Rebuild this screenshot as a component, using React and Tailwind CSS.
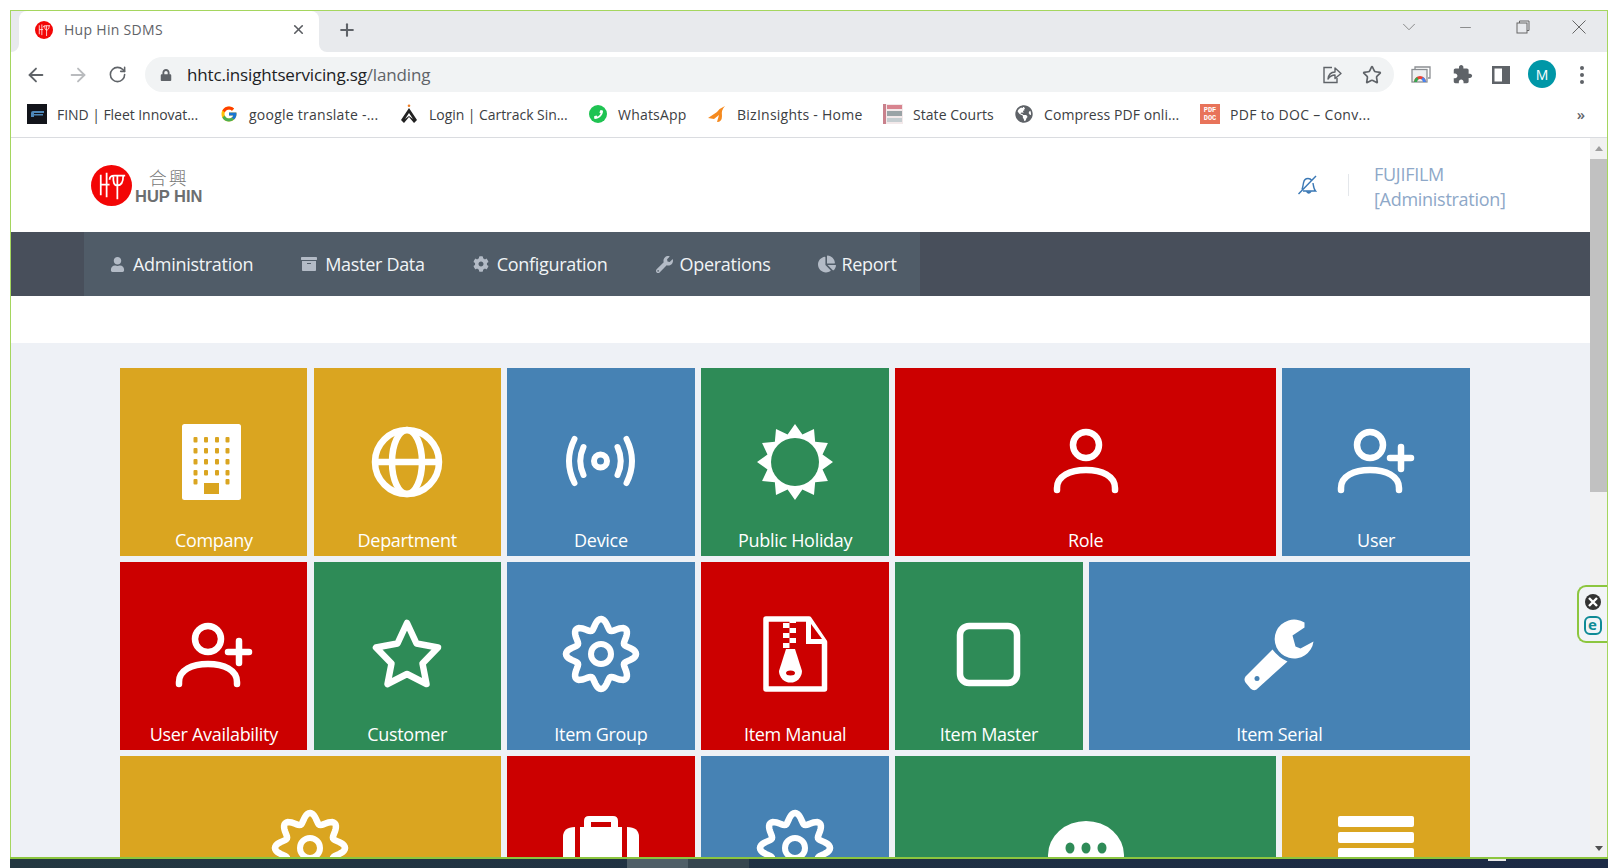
import React from "react";
import { ArrowLeft, ArrowRight, RotateCw, X, Plus, Star, ChevronDown, Minus } from "lucide-react";
import { FaUser, FaArchive, FaCog, FaWrench, FaChartPie, FaLock, FaPhoneAlt, FaGlobeAmericas } from "react-icons/fa";
import { FcGoogle } from "react-icons/fc";

const OPEN = "font-['Open_Sans',sans-serif]";

function gearPath(cx, cy, R, a, n) {
  const pts = [];
  for (let i = 0; i < 160; i++) {
    const t = (i / 160) * Math.PI * 2;
    const r = R + a * Math.cos(n * t);
    pts.push(`${(cx + r * Math.sin(t)).toFixed(2)},${(cy - r * Math.cos(t)).toFixed(2)}`);
  }
  return "M" + pts.join("L") + "Z";
}
function starPoints(cx, cy, ro, ri, n) {
  const pts = [];
  for (let i = 0; i < n * 2; i++) {
    const t = (i / (n * 2)) * Math.PI * 2;
    const r = i % 2 === 0 ? ro : ri;
    pts.push(`${(cx + r * Math.sin(t)).toFixed(2)},${(cy - r * Math.cos(t)).toFixed(2)}`);
  }
  return pts.join(" ");
}

const Svg = ({ children }) => (
  <svg width="76" height="76" viewBox="0 0 76 76" fill="none" stroke="none" className="overflow-visible">{children}</svg>
);

const IconCompany = ({ bg }) => {
  const xs = [19.5, 30, 41, 51.5];
  const ys = [13, 24, 35, 46];
  return (
    <Svg>
      <rect x="6" y="0" width="59" height="76" rx="2.5" fill="#fff" />
      {ys.map((y) => xs.map((x) => <rect key={x + "-" + y} x={x - 2} y={y} width="4" height="5.5" rx="1" fill={bg} />))}
      <rect x="17.5" y="55" width="4" height="5.5" rx="1" fill={bg} />
      <rect x="49.5" y="55" width="4" height="5.5" rx="1" fill={bg} />
      <rect x="28" y="59" width="15" height="11" fill={bg} />
    </Svg>
  );
};
const IconGlobe = () => (
  <Svg>
    <g stroke="#fff" strokeWidth="6.5">
      <circle cx="38" cy="38" r="32" />
      <ellipse cx="38" cy="38" rx="15" ry="32" />
      <path d="M6 38H70" />
    </g>
  </Svg>
);
const IconDevice = () => (
  <Svg>
    <g stroke="#fff" strokeWidth="6" strokeLinecap="round" transform="translate(-0.5 -1)">
      <circle cx="38" cy="38" r="6.5" />
      <path d="M21 24Q14.5 38 21 52" />
      <path d="M55 24Q61.5 38 55 52" />
      <path d="M12 16Q1 38 12 60" />
      <path d="M64 16Q75 38 64 60" />
    </g>
  </Svg>
);
const IconSun = ({ bg }) => (
  <Svg>
    <polygon points={starPoints(38, 38, 38, 28.5, 12)} fill="#fff" />
    <circle cx="38" cy="38" r="24" fill={bg} />
  </Svg>
);
const Person = ({ dx = 0 }) => (
  <g stroke="#fff" strokeWidth="6.5" strokeLinecap="round" fill="none">
    <circle cx={32 + dx} cy="21" r="13" />
    <path d={`M${3 + dx} 66V64C${3 + dx} 52 ${16 + dx} 46 ${32 + dx} 46C${48 + dx} 46 ${61 + dx} 52 ${61 + dx} 64V66`} />
  </g>
);
const IconRole = () => (
  <Svg><Person dx={6} /></Svg>
);
const IconUserAdd = () => (
  <Svg>
    <Person />
    <path d="M63 23V45M52 34H73" stroke="#fff" strokeWidth="6.5" strokeLinecap="round" />
  </Svg>
);
const IconStar = () => (
  <Svg>
    <polygon points="38,5 47.5,25.5 69,29.5 53.5,45.5 57.5,66 38,56 18.5,66 22.5,45.5 7,29.5 28.5,25.5" stroke="#fff" strokeWidth="6.5" strokeLinejoin="round" />
  </Svg>
);
const IconGear = () => (
  <Svg>
    <path d={gearPath(38, 36, 30, 5, 8)} stroke="#fff" strokeWidth="6.5" />
    <circle cx="38" cy="36" r="10" stroke="#fff" strokeWidth="6" />
  </Svg>
);
const IconZip = ({ bg }) => (
  <Svg>
    <g transform="translate(6 -2)">
      <path d="M3 3H46L61.5 26V73H3Z" stroke="#fff" strokeWidth="5.5" strokeLinejoin="round" />
      <path d="M43 1H47L64 26V28H43Z" fill="#fff" />
      <path d="M48 8V23H59Z" fill={bg} />
      {[7, 17, 27].map((y) => <rect key={y} x="20" y={y} width="6.5" height="5" fill="#fff" />)}
      {[2, 12, 22].map((y) => <rect key={y} x="26.5" y={y} width="6.5" height="5" fill="#fff" />)}
      <path d="M23 33H32L39 55A11 11 0 0 1 16 55Z" fill="#fff" />
      <ellipse cx="27.5" cy="57" rx="4.5" ry="2.5" fill={bg} />
    </g>
  </Svg>
);
const IconSquare = () => (
  <Svg>
    <rect x="9" y="8" width="57" height="57" rx="9" stroke="#fff" strokeWidth="6.5" />
  </Svg>
);
const IconWrench = () => (
  <Svg>
    <g transform="translate(3.5 3.5)" fill="#fff">
      <path d="M60 1A19.5 19.5 0 1 0 69 20L56 27L51 25L48 14L60 6Z" fill="#fff" />
      <path d="M28 28Q34 36 43 40L12 68Q9 70 6 67L1 61Q-1 58 1 55Z" />
      <circle cx="12.5" cy="57" r="2.5" fill="#4682b4" />
    </g>
  </Svg>
);
const IconBriefcase = ({ bg }) => (
  <Svg>
    <g transform="translate(0 4)">
      <path d="M21 11V5Q21 0 26 0H50Q55 0 55 5V11H48V6H28V11Z" fill="#fff" />
      <rect x="24" y="3" width="28" height="8" fill="#fff" />
      <rect x="28" y="6" width="20" height="5" fill={bg} />
      <path d="M12 11V76H2Q0 76 0 74V21Q0 11 12 11Z" fill="#fff" />
      <rect x="17" y="11" width="42" height="65" fill="#fff" />
      <path d="M64 11V76H74Q76 76 76 74V21Q76 11 64 11Z" fill="#fff" />
    </g>
  </Svg>
);
const IconChat = ({ bg }) => (
  <Svg>
    <g transform="translate(0 9)">
      <ellipse cx="38" cy="34" rx="38" ry="34" fill="#fff" />
      <path d="M12 56L8 76L30 64Z" fill="#fff" />
      {[22, 38, 54].map((x) => <ellipse key={x} cx={x} cy="27" rx="4.5" ry="5.5" fill={bg} />)}
    </g>
  </Svg>
);
const IconMenu = () => (
  <Svg>
    {[4, 20, 36, 52].map((y) => <rect key={y} x="0" y={y} width="76" height="11" rx="2" fill="#fff" />)}
  </Svg>
);

const GOLD = "#daa520", BLUE = "#4682b4", GREEN = "#2e8b57", RED = "#cc0000";

const tiles = [
  { t: "Company", c: GOLD, bgc: "bg-[#daa520]", I: IconCompany },
  { t: "Department", c: GOLD, bgc: "bg-[#daa520]", I: IconGlobe },
  { t: "Device", c: BLUE, bgc: "bg-[#4682b4]", I: IconDevice },
  { t: "Public Holiday", c: GREEN, bgc: "bg-[#2e8b57]", I: IconSun },
  { t: "Role", c: RED, bgc: "bg-[#cc0000]", I: IconRole, span: true },
  { t: "User", c: BLUE, bgc: "bg-[#4682b4]", I: IconUserAdd },
  { t: "User Availability", c: RED, bgc: "bg-[#cc0000]", I: IconUserAdd },
  { t: "Customer", c: GREEN, bgc: "bg-[#2e8b57]", I: IconStar },
  { t: "Item Group", c: BLUE, bgc: "bg-[#4682b4]", I: IconGear },
  { t: "Item Manual", c: RED, bgc: "bg-[#cc0000]", I: IconZip },
  { t: "Item Master", c: GREEN, bgc: "bg-[#2e8b57]", I: IconSquare },
  { t: "Item Serial", c: BLUE, bgc: "bg-[#4682b4]", I: IconWrench, span: true },
  { c: GOLD, bgc: "bg-[#daa520]", I: IconGear, span: true },
  { c: RED, bgc: "bg-[#cc0000]", I: IconBriefcase },
  { c: BLUE, bgc: "bg-[#4682b4]", I: IconGear },
  { c: GREEN, bgc: "bg-[#2e8b57]", I: IconChat, span: true },
  { c: GOLD, bgc: "bg-[#daa520]", I: IconMenu },
];

function Tile({ t, c, bgc, I, span }) {
  return (
    <div className={`${bgc} ${span ? "col-span-2" : ""} flex flex-col items-center pt-[56px] text-white`}>
      <div className="h-[76px] w-[76px] shrink-0"><I bg={c} /></div>
      {t && <div className={`${OPEN} mt-[28px] text-[18px] leading-[24px] tracking-[-0.3px]`}>{t}</div>}
    </div>
  );
}

const Logo = ({ size }) => (
  <svg width={size} height={size} viewBox="0 0 42 42" className="shrink-0">
    <circle cx="21" cy="21" r="21" fill="#f30606" />
    <g stroke="#fff" strokeWidth="1.8" fill="none">
      <path d="M10 10V31M16 8V33M10 20H19" />
      <path d="M19 15Q19 11 24 11H35M23 11Q22 21 27 21Q33 21 33 11M27 11V35" />
    </g>
  </svg>
);

const books = [
  { t: "FIND | Fleet Innovat...", w: "w-[192px]", k: "tracking-[-0.05px]", i: (
    <svg width="20" height="20" viewBox="0 0 20 20"><rect width="20" height="20" fill="#12141a" /><path d="M4 13V9Q4 7 6 7H17V9H7V13ZM7 10H16V11.5H7Z" fill="#4e87b8" /></svg>
  ) },
  { t: "google translate -...", w: "w-[180px]", k: "tracking-[0.25px]", i: <FcGoogle size={18} /> },
  { t: "Login | Cartrack Sin...", w: "w-[189px]", k: "tracking-[-0.05px]", i: (
    <svg width="20" height="20" viewBox="0 0 20 20"><path d="M10 4L18 16L15 19L10 13L5 19L2 16Z" fill="#222" /><path d="M10 9L14 15L10 12L6 15Z" fill="#fff" /><circle cx="10" cy="1.8" r="1.3" fill="#ef7d22" /></svg>
  ) },
  { t: "WhatsApp", w: "w-[119px]", k: "tracking-[0.2px]", i: (
    <div className="flex h-[18px] w-[18px] items-center justify-center rounded-full bg-[#1fc352]"><FaPhoneAlt size={9} color="#fff" className="-scale-x-100" /></div>
  ) },
  { t: "BizInsights - Home", w: "w-[176px]", k: "tracking-[0.25px]", i: (
    <svg width="20" height="20" viewBox="0 0 20 20"><path d="M1 14L10 8Q13 4 18 2Q14 6 15 12Q15 18 10 18L12 11L7 15Z" fill="#f58a1f" /></svg>
  ) },
  { t: "State Courts", w: "w-[131px]", k: "tracking-[0.05px]", i: (
    <svg width="20" height="20" viewBox="0 0 20 20"><rect width="20" height="20" fill="#f3e9ea" /><rect y="0" width="3" height="20" fill="#c9818c" /><rect x="4" y="1" width="15" height="4" fill="#d8848f" /><rect x="4" y="7" width="15" height="5" fill="#9aa3a6" /><rect x="4" y="14" width="15" height="4" fill="#c5cdd0" /></svg>
  ) },
  { t: "Compress PDF onli...", w: "w-[186px]", k: "tracking-[0.07px]", i: <FaGlobeAmericas size={18} color="#5f6368" /> },
  { t: "PDF to DOC – Conv...", w: "w-[200px]", k: "tracking-[0.3px]", i: (
    <div className="flex h-[20px] w-[20px] flex-col items-center justify-center bg-[#e8735a] font-['Liberation_Mono',monospace] text-[7px] font-bold leading-[8px] text-white"><span>PDF</span><span>DOC</span></div>
  ) },
];

const navs = [
  { t: "Administration", I: FaUser, s: 15, g: "gap-[8px]" },
  { t: "Master Data", I: FaArchive, s: 16, g: "gap-[8px]" },
  { t: "Configuration", I: FaCog, s: 16, g: "gap-[8px]" },
  { t: "Operations", I: FaWrench, s: 17, g: "gap-[7px]" },
  { t: "Report", I: FaChartPie, s: 18, g: "gap-[5px]" },
];

export default function App() {
  return (
    <div className="h-[868px] w-[1618px] overflow-hidden bg-white px-[10px] pt-[10px]">
      <div className={`${OPEN} flex h-[849px] flex-col`}>
        <div className="flex min-h-0 flex-1 flex-col border-x border-t border-[#a5d65f]">
          {/* tab strip */}
          <div className="flex h-[41px] shrink-0 bg-[#e8eaed]">
            <div className="relative ml-[8px] flex w-[300px] items-center rounded-t-[8px] bg-white pb-[4px] pl-[16px]">
              <div className="absolute bottom-0 left-[-8px] h-[8px] w-[8px] bg-white"><div className="h-full w-full rounded-br-[8px] bg-[#e8eaed]" /></div>
              <div className="absolute bottom-0 right-[-8px] h-[8px] w-[8px] bg-white"><div className="h-full w-full rounded-bl-[8px] bg-[#e8eaed]" /></div>
              <Logo size={18} />
              <span className="ml-[11px] text-[14px] tracking-[0.3px] text-[#5f6368]">Hup Hin SDMS</span>
              <X size={15} strokeWidth={2.6} className="ml-auto mr-[13px] text-[#5a5d61]" />
            </div>
            <div className="ml-[18px] flex items-center pb-[3px]"><Plus size={20} strokeWidth={2.5} className="text-[#5f6368]" /></div>
            <div className="ml-auto flex items-center pb-[9px]">
              <div className="flex w-[57px] justify-center"><ChevronDown size={22} strokeWidth={0.9} className="text-[#777]" /></div>
              <div className="flex w-[57px] justify-center"><Minus size={17} strokeWidth={1} className="text-[#666]" /></div>
              <div className="flex w-[57px] justify-center">
                <svg width="14" height="14" viewBox="0 0 14 14" fill="none" stroke="#666" strokeWidth="1"><path d="M3.5 3V1H13V10.5H11" /><rect x="1" y="3" width="10" height="10" /></svg>
              </div>
              <div className="flex w-[56px] justify-center">
                <svg width="14" height="14" viewBox="0 0 14 14" stroke="#666" strokeWidth="1"><path d="M.5.5L13.5 13.5M13.5.5L.5 13.5" /></svg>
              </div>
            </div>
          </div>
          {/* toolbar */}
          <div className="flex h-[40px] shrink-0 items-start bg-white pl-[4px] pt-[5px]">
            <div className="flex h-[35px] w-[42px] items-center justify-center"><ArrowLeft size={22} strokeWidth={2} className="text-[#5f6368]" /></div>
            <div className="flex h-[35px] w-[42px] items-center justify-center"><ArrowRight size={22} strokeWidth={2} className="text-[#b9bbbe]" /></div>
            <div className="flex h-[35px] w-[36px] items-center justify-center"><RotateCw size={19} strokeWidth={2} className="text-[#5f6368]" /></div>
            <div className="ml-[10px] flex h-[35px] w-[1249px] items-center rounded-full bg-[#f1f3f4] pl-[15px] pr-[12px]">
              <FaLock size={12} className="text-[#5f6368]" />
              <span className="ml-[15px] text-[17px] tracking-[-0.16px] text-[#202124]">hhtc.insightservicing.sg<span className="text-[#5f6368]">/landing</span></span>
              <svg width="20" height="20" viewBox="0 0 20 20" fill="none" stroke="#5f6368" strokeWidth="1.4" className="ml-auto">
                <path d="M10 2.5H2V17.5H15V13" />
                <path d="M6 14C6.5 9.5 9.5 7.2 13 7V3L19 8.5L13 13.5V10C10 10 7.8 11.5 6 14Z" strokeLinejoin="round" />
              </svg>
              <Star size={20} strokeWidth={2} className="ml-[20px] text-[#5f6368]" />
            </div>
            <div className="ml-[8px] flex h-[35px] w-[38px] items-center justify-center">
              <svg width="20" height="17" viewBox="0 0 20 17" fill="none">
                <path d="M4 3V1H19V12H17" stroke="#8c8f93" strokeWidth="1.3" />
                <rect x="1" y="3.5" width="15" height="12.5" fill="#eef0f1" stroke="#8c8f93" strokeWidth="1.3" />
                <path d="M3 16A6 6 0 0 1 15 16H12A3 3 0 0 0 6 16Z" fill="#ea4335" />
                <path d="M3 16A6 6 0 0 1 6 11L7.5 13.5A3 3 0 0 0 6 16Z" fill="#34a853" />
                <path d="M15 16A6 6 0 0 0 12 11L10.5 13.5A3 3 0 0 1 12 16Z" fill="#4285f4" />
              </svg>
            </div>
            <div className="flex h-[35px] w-[44px] items-center justify-center">
              <svg width="21" height="21" viewBox="0 0 24 24" fill="#5f6368"><path d="M20.5 11H19V7c0-1.1-.9-2-2-2h-4V3.5C13 2.12 11.88 1 10.5 1S8 2.12 8 3.5V5H4c-1.1 0-1.99.9-1.99 2v3.8H3.5c1.49 0 2.7 1.21 2.7 2.7s-1.21 2.7-2.7 2.7H2V20c0 1.1.9 2 2 2h3.8v-1.5c0-1.49 1.21-2.7 2.7-2.7 1.49 0 2.7 1.21 2.7 2.7V22H17c1.1 0 2-.9 2-2v-4h1.5c1.38 0 2.5-1.12 2.5-2.5S21.88 11 20.5 11z" /></svg>
            </div>
            <div className="flex h-[35px] w-[34px] items-center justify-center">
              <svg width="18" height="18" viewBox="0 0 18 18"><path fillRule="evenodd" clipRule="evenodd" d="M0 0H18V18H0ZM2.5 2.5V15.5H10V2.5Z" fill="#5f6368" /></svg>
            </div>
            <div className="ml-[10px] mt-[3px] flex h-[28px] w-[28px] items-center justify-center self-start rounded-full bg-[#0097a7] text-[14px] text-white">M</div>
            <div className="flex h-[35px] w-[51px] flex-col items-center justify-center gap-[3px]">
              <span className="h-[4px] w-[4px] rounded-full bg-[#5f6368]" />
              <span className="h-[4px] w-[4px] rounded-full bg-[#5f6368]" />
              <span className="h-[4px] w-[4px] rounded-full bg-[#5f6368]" />
            </div>
          </div>
          {/* bookmarks */}
          <div className="flex h-[46px] shrink-0 items-center border-b-[1.5px] border-[#dadce0] bg-white pb-[1px] pl-[16px]">
            {books.map((b) => (
              <div key={b.t} className={`${b.w} flex shrink-0 items-center gap-[10px]`}>
                <div className="flex h-[20px] w-[20px] shrink-0 items-center justify-center">{b.i}</div>
                <span className={`${b.k} whitespace-nowrap text-[14px] text-[#3c4043]`}>{b.t}</span>
              </div>
            ))}
            <span className="ml-auto mr-[22px] text-[15px] font-semibold leading-none text-[#5f6368]">»</span>
          </div>
          {/* page */}
          <div className="relative flex min-h-0 flex-1">
            <div className="min-h-0 min-w-0 flex-1 overflow-hidden bg-[#eef1f6]">
              <div className="flex h-[94px] items-center bg-white pl-[80px]">
                <Logo size={41} />
                <div className="ml-[3px] flex flex-col items-center">
                  <span className="font-['Noto_Sans_CJK_TC',serif] text-[18px] font-light leading-[21px] tracking-[2px] text-[#777]">合興</span>
                  <span className="font-['Liberation_Sans',sans-serif] text-[16.5px] font-bold leading-[16px] text-[#6c6e70]">HUP HIN</span>
                </div>
                <div className="ml-auto flex items-center">
                  <svg width="20" height="20" viewBox="0 0 20 20" fill="none" stroke="#3a78b5" strokeWidth="1.4">
                    <path d="M1.5 19L19 1" />
                    <path d="M5 14.5C6 12 6 10 6.5 8C7 5 9 3.5 11 3.5C13 3.5 14 4.3 14.8 5.5M16 8C16.5 11 16.7 14 18.5 16H6" />
                    <path d="M10 17A2 2 0 0 0 13.5 17Z" fill="#3a78b5" />
                  </svg>
                  <div className="ml-[31px] h-[22px] w-px bg-[#e4e7eb]" />
                  <div className="ml-[25px] w-[216px] pt-[3px] text-[18px] leading-[25px] tracking-[-0.28px] text-[#8ea8c8]">
                    <div>FUJIFILM</div>
                    <div>[Administration]</div>
                  </div>
                </div>
              </div>
              <div className="flex h-[64px] bg-[#484f5b] pl-[73px]">
                <div className="flex w-[836px] items-center gap-[48px] bg-[#505c68] pl-[26px]">
                  {navs.map(({ t, I, s, g }) => (
                    <div key={t} className={`flex items-center ${g}`}>
                      <I size={s} className="text-[#b3bbc6]" />
                      <span className="text-[18px] tracking-[-0.3px] text-[#f1f4f6]">{t}</span>
                    </div>
                  ))}
                </div>
              </div>
              <div className="h-[47px] bg-white" />
              <div className="ml-[109.2px] mt-[25px] grid w-[1350px] auto-rows-[188px] grid-cols-[187.2px_187.2px_188px_188px_187.2px_187.2px_188px] gap-x-[6.2px] gap-y-[6px]">
                {tiles.map((x, i) => <Tile key={i} {...x} />)}
              </div>
            </div>
            {/* scrollbar */}
            <div className="flex w-[17px] shrink-0 flex-col bg-[#f1f1f1]">
              <div className="flex h-[21px] shrink-0 items-center justify-center">
                <div className="h-0 w-0 border-x-[4.5px] border-b-[5px] border-x-transparent border-b-[#9e9e9e]" />
              </div>
              <div className="h-[333px] shrink-0 bg-[#c1c1c1]" />
              <div className="mt-auto flex h-[18px] items-center justify-center">
                <div className="h-0 w-0 border-x-[4.5px] border-t-[5px] border-x-transparent border-t-[#505050]" />
              </div>
            </div>
            {/* security widget */}
            <div className="absolute right-0 top-[447px] flex h-[58px] w-[30px] flex-col items-center gap-[6px] rounded-l-[9px] border-2 border-r-0 border-[#8cc63f] bg-[#f2f4f7] pr-[1px] pt-[7px]">
              <div className="flex h-[16px] w-[16px] shrink-0 items-center justify-center rounded-full bg-[#333]">
                <svg width="10" height="10" viewBox="0 0 10 10" stroke="#fff" strokeWidth="2.4"><path d="M1 1L9 9M9 1L1 9" /></svg>
              </div>
              <div className="flex h-[19px] w-[18px] shrink-0 items-center justify-center rounded-[6px] border-2 border-[#0e8a96] pb-[2px] text-[15px] font-bold leading-none text-[#0e8a96]">e</div>
            </div>
          </div>
        </div>
        <div className="h-[2px] shrink-0 bg-[#8cc63f]" />
      </div>
      <div className="flex h-[9px] items-stretch bg-gradient-to-r from-[#233841] to-[#1c2a45]">
        <div className="ml-[617px] w-[61px] bg-[#4f5f68]" />
        <div className="w-[61px] bg-[#36464f]" />
        <span className="ml-auto mr-[102px] h-[2px] w-[18px] bg-[#e8e8e8]" />
      </div>
    </div>
  );
}
